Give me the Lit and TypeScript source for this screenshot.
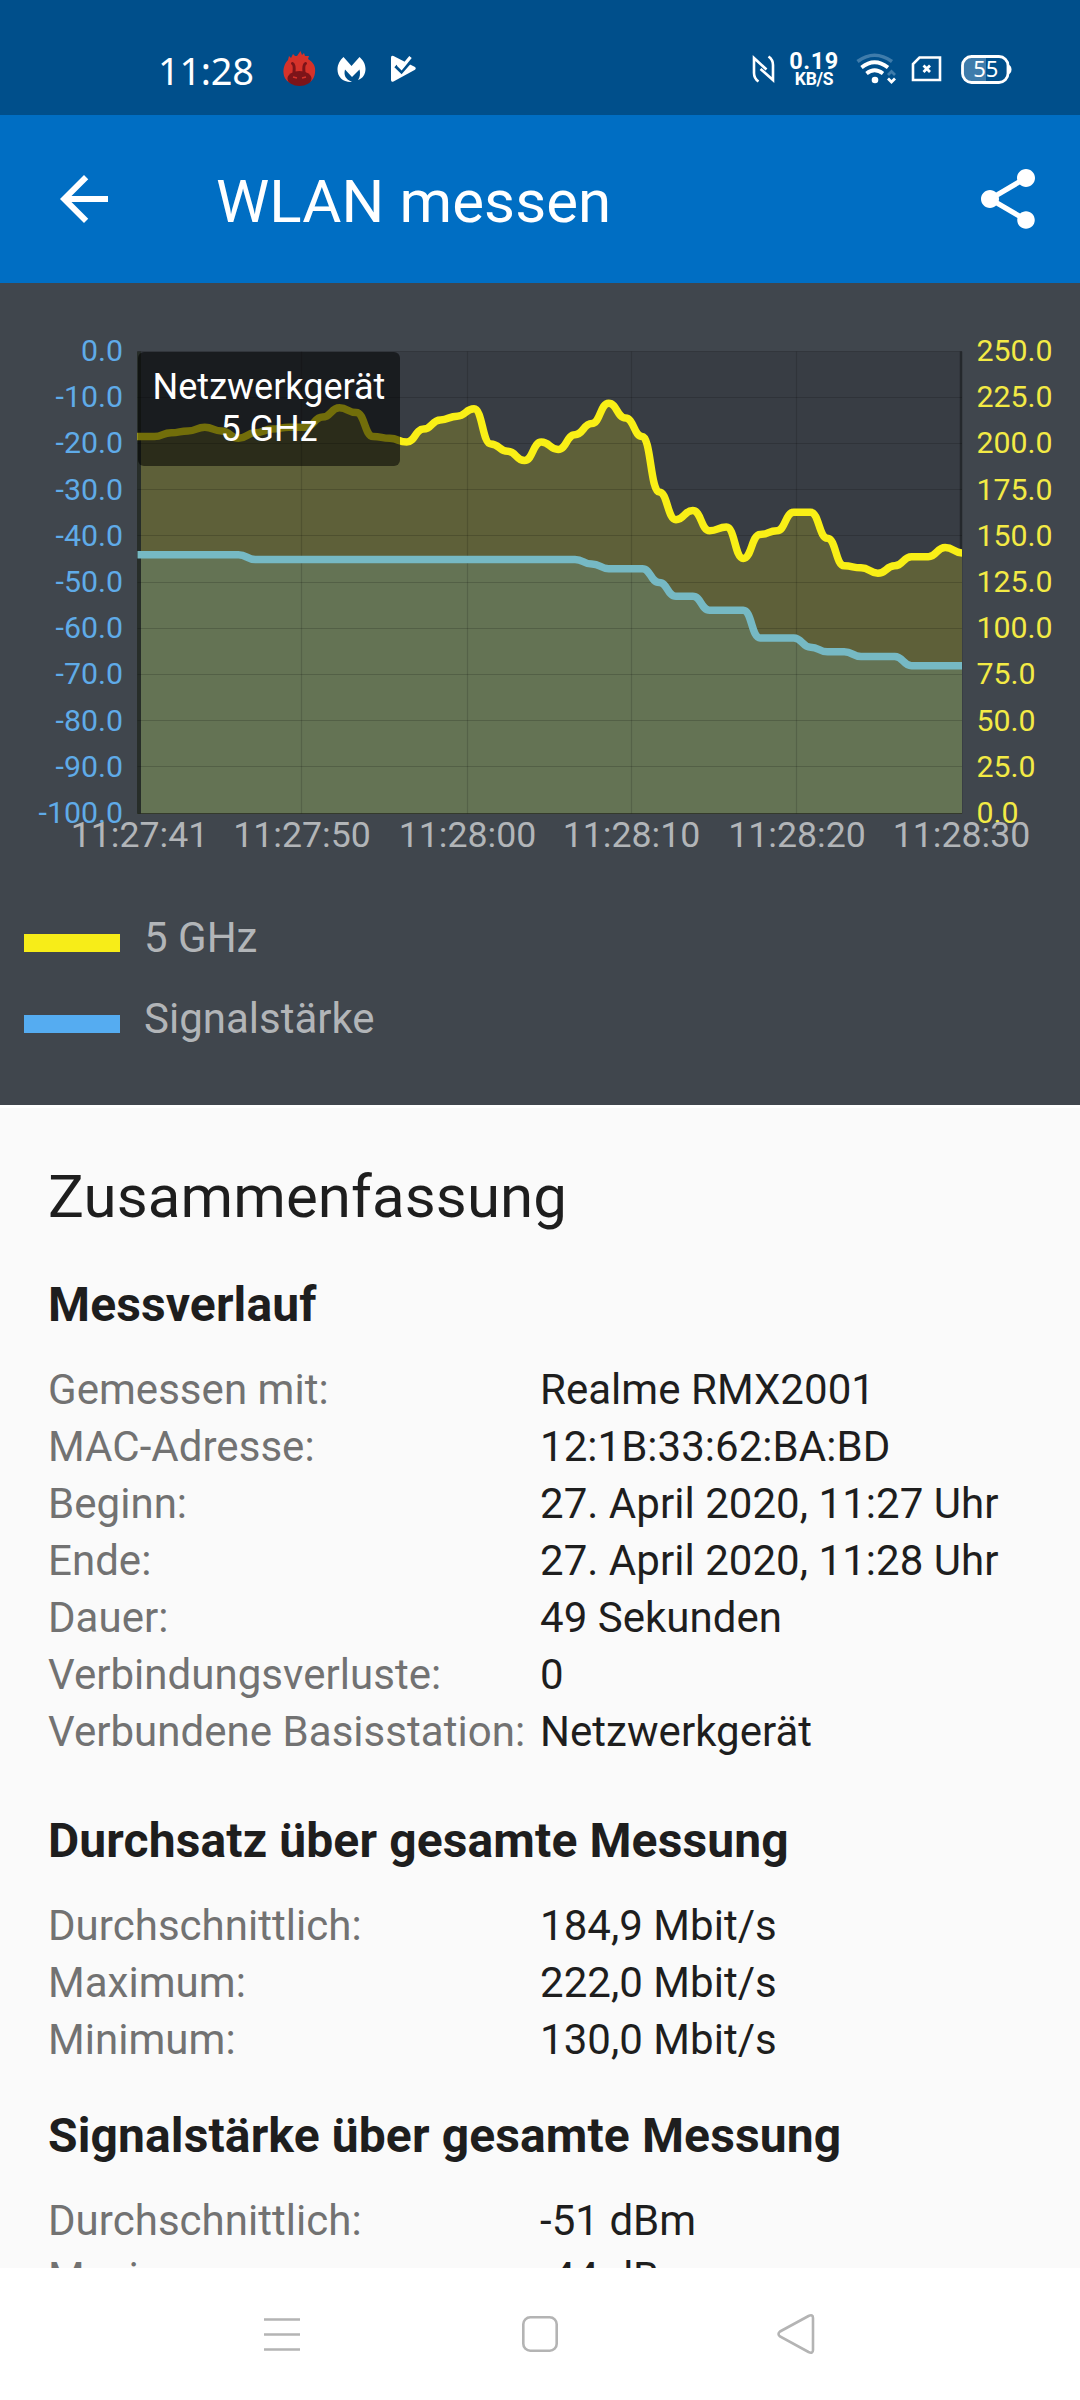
import { LitElement, html, svg, css } from "lit";
import { customElement, property } from "lit/decorators.js";

type Row = [string, string];
interface Section {
  title: string;
  rows: Row[];
}

const THROUGHPUT = [
  204, 204, 206, 207, 209, 207, 203, 206, 208, 209, 209, 214.5, 219.5, 217, 204, 203, 201, 208, 213,
  215, 219, 200, 196, 191, 201, 197, 205, 211, 222, 214, 204, 174, 159, 164, 153, 155, 138, 151, 153,
  163, 163, 149, 134, 133, 130, 134, 139, 139, 144, 141,
];
const SIGNAL = [
  ...Array(7).fill(-44),
  ...Array(20).fill(-45),
  -46, -47, -47, -47, -50, -53, -53, -56, -56, -56, -62, -62, -62, -64, -65, -65, -66, -66, -66, -68,
  -68, -68, -68,
];
const TIMES: [string, number][] = [
  ["11:27:41", 139.5],
  ["11:27:50", 302],
  ["11:28:00", 467.5],
  ["11:28:10", 631.5],
  ["11:28:20", 797],
  ["11:28:30", 961.5],
];
const SECTIONS: Section[] = [
  {
    title: "Messverlauf",
    rows: [
      ["Gemessen mit:", "Realme RMX2001"],
      ["MAC-Adresse:", "12:1B:33:62:BA:BD"],
      ["Beginn:", "27. April 2020, 11:27 Uhr"],
      ["Ende:", "27. April 2020, 11:28 Uhr"],
      ["Dauer:", "49 Sekunden"],
      ["Verbindungsverluste:", "0"],
      ["Verbundene Basisstation:", "Netzwerkgerät"],
    ],
  },
  {
    title: "Durchsatz über gesamte Messung",
    rows: [
      ["Durchschnittlich:", "184,9 Mbit/s"],
      ["Maximum:", "222,0 Mbit/s"],
      ["Minimum:", "130,0 Mbit/s"],
    ],
  },
  {
    title: "Signalstärke über gesamte Messung",
    rows: [
      ["Durchschnittlich:", "-51 dBm"],
      ["Maximum:", "-44 dBm"],
    ],
  },
];

const LEFT = 137.5;
const RIGHT = 962;
const TOP = 68.5;
const HEIGHT = 462;
const BOTTOM = TOP + HEIGHT;

/** Curve through the samples that is level at every sample. */
function curve(fractions: number[]): string {
  const step = (RIGHT - LEFT) / (fractions.length - 1);
  const pts = fractions.map((f, i) => [LEFT + i * step, TOP + f * HEIGHT]);
  let d = `M${pts[0][0]} ${pts[0][1]}`;
  for (let i = 1; i < pts.length; i++) {
    const p = pts[i - 1];
    const c = pts[i];
    const mid = (p[0] + c[0]) / 2;
    d += `C${mid} ${p[1]} ${mid} ${c[1]} ${c[0]} ${c[1]}`;
  }
  return d;
}

@customElement("status-bar")
class StatusBar extends LitElement {
  static styles = css`
    :host {
      display: flex;
      align-items: center;
      justify-content: space-between;
      height: 115px;
      box-sizing: border-box;
      padding: 23px 68px 0 158px;
      background: #004f8b;
      color: #fff;
    }
    .group {
      display: flex;
      align-items: center;
    }
    svg {
      display: block;
    }
    .time {
      width: 125px;
      margin-top: 2px;
      font: 400 38px/44px "Noto Sans", sans-serif;
      letter-spacing: -0.3px;
    }
    .apps {
      gap: 22px;
    }
    .mal {
      margin-left: -1px;
      margin-right: 2px;
    }
    .rate {
      display: flex;
      flex-direction: column;
      align-items: center;
      width: 50px;
      margin: 0 17px 0 14px;
      font-weight: 700;
    }
    .amount {
      font-size: 23.5px;
      line-height: 19px;
      letter-spacing: 0.5px;
    }
    .unit {
      font-size: 17.5px;
      line-height: 16px;
      letter-spacing: -0.3px;
    }
    .sim {
      margin: 0 19px 0 15px;
    }
    .level {
      font: 400 22px "Noto Sans", sans-serif;
    }
  `;
  render() {
    return html`
      <div class="group">
        <span class="time">11:28</span>
        <div class="group apps">
          <svg width="33" height="36" viewBox="0 0 33 36">
            <path fill="#d5322a" d="M14 5 17.500 0l1.500 4 2-2 1 3 4 0-1 3c5 3 8 7 7 14-1 8-7 12-15.500 12S1 30 .5 22C0 17 2 12 5 9l1-4 2 2 2-4 2 2z"/>
            <ellipse cx="16.500" cy="27.500" rx="12" ry="7.500" fill="#7c1419"/>
            <path d="M9.500 12.500c2 1 2 4 1.500 9M22.500 12.500c-2 1-2 4-1.500 9" stroke="#7c1419" stroke-width="3" fill="none" stroke-linecap="round"/>
            <path d="M10 26l4 1M23 26l-4 1" stroke="#d5322a" stroke-width="1.500"/>
          </svg>
          <svg class="mal" width="29" height="27" viewBox="0 0 29 27">
            <path fill="#fff" d="M6.500 1 14.500 10 22.500 1C26 4 28.500 8 28.500 13c0 5-2.500 9.500-7.500 11 2-2.500 2.500-7 1.500-10.500l-7.500 7.500-7-7.500c-1.500 6 .5 9.500 7 12.500C6 26.500.5 21 .5 13.500.5 8.500 3 4 6.500 1z"/>
          </svg>
          <svg width="26" height="28" viewBox="0 0 26 28">
            <path fill="#fff" d="M1 2.500Q1 0 3.500 1L25 12q1.500 1.300 0 2.800L3.500 26.500Q1 27.500 1 25z"/>
            <path d="M5.500 11l6 6L22 5" stroke="#004f8b" stroke-width="3.200" fill="none"/>
            <path d="M8 9.500l3.500 3.500L20.500 2" stroke="#fff" stroke-width="3.200" fill="none"/>
          </svg>
        </div>
      </div>
      <div class="group">
        <svg width="23" height="28" viewBox="0 0 23 28">
          <path d="M6.500 26.500Q2 23.500 2 18V3L14.500 14.500M16.500 1.500Q21 4.500 21 10v15L8.500 14" stroke="#fff" stroke-width="2.600" fill="none"/>
        </svg>
        <div class="rate"><span class="amount">0.19</span><span class="unit">KB/S</span></div>
        <svg width="40" height="32" viewBox="0 0 40 32">
          <path d="M1.500 8.500Q18.500-4 36 8.500" stroke="#3f7cab" stroke-width="3.600" fill="none"/>
          <path d="M5.500 14.500Q18.500 4 32 14.500M10.500 20.500Q18.500 14 27 20.500" stroke="#fff" stroke-width="3.800" fill="none"/>
          <circle cx="19" cy="27" r="3.300" fill="#fff"/>
          <path d="M32 22l3.500-3.500L39 22" stroke="#3f7cab" stroke-width="2.800" fill="none"/>
          <path d="M32 25.500l3.500 3.500 3.500-3.500" stroke="#fff" stroke-width="2.800" fill="none"/>
        </svg>
        <svg class="sim" width="31" height="26" viewBox="0 0 31 26">
          <path d="M8.500 1.500h20.500v22.500H2V8z" stroke="#fff" stroke-width="2.600" fill="none"/>
          <path d="M12.500 9.500l6.500 6.500M19 9.500L12.500 16" stroke="#fff" stroke-width="2.800"/>
        </svg>
        <svg width="51" height="29" viewBox="0 0 51 29">
          <path d="M10 2h15v25H10Q2 27 2 19v-9Q2 2 10 2z" fill="#3f7cab"/>
          <rect x="1.500" y="1.500" width="45.500" height="26" rx="9" stroke="#fff" stroke-width="2.800" fill="none"/>
          <path d="M47 9.500q3.500 1 3.500 5t-3.500 5z" fill="#fff"/>
          <text class="level" x="24.800" y="22.300" text-anchor="middle" fill="#fff">55</text>
        </svg>
      </div>
    `;
  }
}

@customElement("app-bar")
class AppBar extends LitElement {
  static styles = css`
    :host {
      display: flex;
      align-items: center;
      height: 168px;
      box-sizing: border-box;
      padding: 0 36px 0 48px;
      background: #006ec3;
      color: #fff;
    }
    .title {
      flex: 1;
      margin: 6px 0 0 96px;
      font-size: 60px;
      line-height: 70px;
      font-weight: 400;
      letter-spacing: 0.1px;
    }
  `;
  render() {
    return html`
      <svg width="72" height="72" viewBox="0 0 24 24" fill="#fff">
        <path d="M20 11H7.830l5.590-5.590L12 4l-8 8 8 8 1.410-1.410L7.830 13H20v-2z"/>
      </svg>
      <div class="title">WLAN messen</div>
      <svg width="72" height="72" viewBox="0 0 24 24" fill="#fff">
        <path d="M18 16.080c-.76 0-1.440.3-1.960.77L8.910 12.700c.05-.23.09-.46.09-.7s-.04-.47-.09-.7l7.050-4.110c.54.5 1.250.81 2.040.81 1.660 0 3-1.340 3-3s-1.340-3-3-3-3 1.340-3 3c0 .24.04.47.09.7L8.040 9.810C7.500 9.310 6.790 9 6 9c-1.660 0-3 1.340-3 3s1.340 3 3 3c.79 0 1.500-.31 2.040-.81l7.120 4.160c-.05.21-.08.43-.08.65 0 1.610 1.310 2.920 2.920 2.920s2.920-1.310 2.920-2.920-1.310-2.920-2.920-2.920z"/>
      </svg>
    `;
  }
}

@customElement("signal-chart")
class SignalChart extends LitElement {
  static styles = css`
    :host {
      display: block;
      height: 822px;
      background: #40464d;
    }
    .plot {
      position: relative;
      height: 630px;
    }
    .canvas {
      display: block;
    }
    .axis {
      font-size: 30.300px;
    }
    .dbm {
      fill: #5fabe8;
      text-anchor: end;
    }
    .mbit {
      fill: #f3ea45;
    }
    .time {
      font-size: 35.700px;
      fill: #b2b5b8;
      text-anchor: middle;
    }
    .tooltip {
      position: absolute;
      left: 138px;
      top: 69px;
      width: 262px;
      height: 114px;
      box-sizing: border-box;
      padding-top: 14px;
      border-radius: 6px;
      background: rgba(0, 0, 0, 0.54);
      color: #fff;
      font-size: 36px;
      line-height: 42px;
      text-align: center;
    }
    .legend {
      display: grid;
      gap: 32px;
      padding: 0 24px;
    }
    .entry {
      display: flex;
      align-items: center;
      gap: 24px;
      height: 49px;
      font-size: 42px;
      line-height: 49px;
      color: #b2b5b8;
    }
    .swatch {
      width: 96px;
      height: 18px;
      margin-top: 11px;
    }
    .yellow {
      background: #f7ed18;
    }
    .blue {
      background: #55acf1;
    }
  `;
  render() {
    const yellow = curve(THROUGHPUT.map((v) => 1 - v / 250));
    const blue = curve(SIGNAL.map((v) => -v / 100));
    const close = `L${RIGHT} ${BOTTOM}L${LEFT} ${BOTTOM}Z`;
    const ticks = Array.from({ length: 11 }, (_, i) => i);
    return html`
      <div class="plot">
        <svg class="canvas" width="1080" height="630" viewBox="0 0 1080 630">
          <rect x=${LEFT} y=${TOP} width=${RIGHT - LEFT} height=${HEIGHT} fill="#383d44"/>
          <path d="M961 ${TOP}V${BOTTOM}" stroke="#24282c" stroke-width="2.500"/>
          <path d="${yellow}${close}" fill="#5e6039"/>
          <path d="${blue}${close}" fill="#647354"/>
          <path d="M139 ${TOP}V${BOTTOM}" stroke="#272d29" stroke-width="4"/>
          ${ticks.map((i) => {
            const y = Math.round(TOP + (i * HEIGHT) / 10) - 0.5;
            return svg`<path d="M${LEFT} ${y}H${RIGHT}" stroke="#000" stroke-opacity=${i === 10 ? 0.4 : 0.16} stroke-width="1.200"/>`;
          })}
          ${TIMES.slice(1, 5).map(
            ([, x]) => svg`<path d="M${Math.round(x) - 0.5} ${TOP}V${BOTTOM}" stroke="#000" stroke-opacity=".14" stroke-width="1.200"/>`,
          )}
          <path d=${blue} fill="none" stroke="#76b9c4" stroke-width="7.500"/>
          <path d=${yellow} fill="none" stroke="#f9ef16" stroke-width="7.500"/>
          ${ticks.map((i) => {
            const y = TOP + (i * HEIGHT) / 10 + 9.5;
            return svg`
              <text class="axis dbm" x="123" y=${y}>${i ? `-${i * 10}.0` : "0.0"}</text>
              <text class="axis mbit" x="976.500" y=${y}>${(250 - i * 25).toFixed(1)}</text>`;
          })}
          ${TIMES.map(([t, x]) => svg`<text class="time" x=${x} y="564">${t}</text>`)}
        </svg>
        <div class="tooltip">Netzwerkgerät<br />5 GHz</div>
      </div>
      <div class="legend">
        <div class="entry"><span class="swatch yellow"></span>5 GHz</div>
        <div class="entry"><span class="swatch blue"></span>Signalstärke</div>
      </div>
    `;
  }
}

@customElement("summary-section")
class SummarySection extends LitElement {
  @property({ attribute: false }) section!: Section;
  static styles = css`
    :host {
      display: block;
    }
    .heading {
      font-size: 48px;
      line-height: 56px;
      font-weight: 700;
      letter-spacing: 0.12px;
      margin-bottom: 28px;
    }
    .rows {
      display: grid;
      grid-template-columns: 492px 1fr;
      grid-auto-rows: 57px;
      font-size: 42px;
      line-height: 57px;
      letter-spacing: 0.04px;
      white-space: nowrap;
    }
    .label {
      color: #727272;
    }
  `;
  render() {
    return html`
      <div class="heading">${this.section.title}</div>
      <div class="rows">
        ${this.section.rows.map(([k, v]) => html`<span class="label">${k}</span><span>${v}</span>`)}
      </div>
    `;
  }
}

@customElement("nav-bar")
class NavBar extends LitElement {
  static styles = css`
    :host {
      display: flex;
      align-items: center;
      justify-content: center;
      gap: 216px;
      height: 132px;
      background: #fff;
    }
    svg {
      display: block;
    }
  `;
  render() {
    return html`
      <svg width="42" height="42" viewBox="0 0 42 42" stroke="#b4b4b4" stroke-width="2.600">
        <path d="M3 6.500h36M3 21.500h36M3 36.500h36"/>
      </svg>
      <svg width="42" height="42" viewBox="0 0 42 42" stroke="#b4b4b4" stroke-width="2.600" fill="none">
        <rect x="4.300" y="4.300" width="33.400" height="33.400" rx="7"/>
      </svg>
      <svg width="42" height="42" viewBox="0 0 42 42" stroke="#b4b4b4" stroke-width="2.600" fill="none">
        <path d="M3 18.500 31.500 3Q36 1 36 5v32q0 4-4.500 2L3 23.500Q0 21 3 18.500z"/>
      </svg>
    `;
  }
}

@customElement("app-root")
class AppRoot extends LitElement {
  static styles = css`
    :host {
      display: flex;
      flex-direction: column;
      width: 1080px;
      height: 2400px;
      overflow: hidden;
      background: #fafafa;
      color: #1e1e1e;
      font-family: Roboto, sans-serif;
    }
    .bar {
      flex: none;
    }
    .summary {
      flex: 1;
      min-height: 0;
      overflow: hidden;
      box-sizing: border-box;
      padding: 54px 48px 0;
      border-top: 3px solid #fff;
    }
    .title {
      font-size: 60px;
      line-height: 70px;
      letter-spacing: 0.1px;
      margin-bottom: 45px;
    }
    .sections {
      display: grid;
      gap: 40px;
    }
    .sections > :first-child {
      margin-bottom: 13px;
    }
  `;
  render() {
    return html`
      <status-bar class="bar"></status-bar>
      <app-bar class="bar"></app-bar>
      <signal-chart class="bar"></signal-chart>
      <div class="summary">
        <div class="title">Zusammenfassung</div>
        <div class="sections">
          ${SECTIONS.map((s) => html`<summary-section .section=${s}></summary-section>`)}
        </div>
      </div>
      <nav-bar class="bar"></nav-bar>
    `;
  }
}
